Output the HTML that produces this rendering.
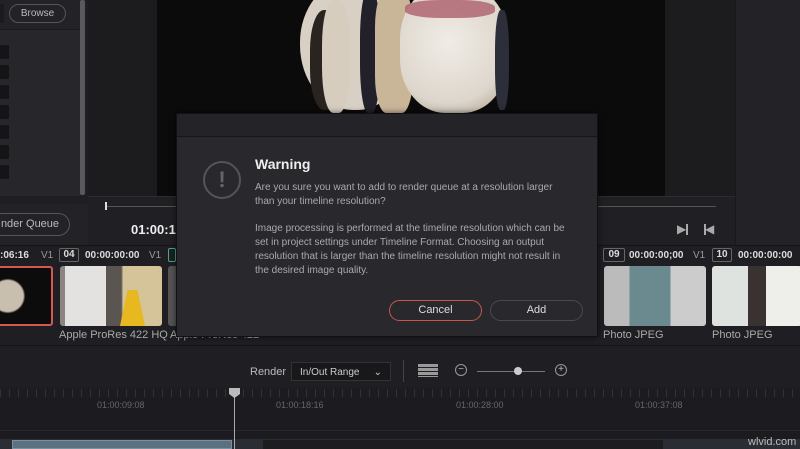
<!DOCTYPE html>
<html><head><meta charset="utf-8"><style>
*{margin:0;padding:0;box-sizing:border-box}
body{width:800px;height:449px;overflow:hidden;background:#1f1f23;font-family:"Liberation Sans",sans-serif;position:relative;color:#ccc}
.a{position:absolute}
.btn{position:absolute;border:1px solid #55555a;border-radius:12px;color:#bbb;font-size:11px;text-align:center}
.t{position:absolute;font-size:10px;white-space:nowrap}
.thumb{position:absolute;top:266px;height:60px;border-radius:3px;overflow:hidden}
</style></head><body>
<!-- left panel -->
<div class="a" style="left:0;top:0;width:80px;height:196px;background:#27272b"></div>
<div class="a" style="left:0;top:0;width:80px;height:30px;background:#232327;border-bottom:1px solid #1a1a1d"></div>
<div class="btn" style="left:9px;top:4px;width:57px;height:19px;line-height:17px;font-size:10px">Browse</div>
<div class="a" style="left:0;top:4px;width:4px;height:19px;background:#1b1b1d"></div>
<div class="a" style="left:0;top:45px;width:9px;height:136px;background:repeating-linear-gradient(#151517 0 14px,#27272b 14px 20px)"></div>
<div class="a" style="left:80px;top:0;width:5px;height:195px;background:#5a5a5e;border-radius:2px"></div>
<div class="a" style="left:0;top:204px;width:88px;height:42px;background:#232327"></div>
<div class="btn" style="left:-10px;top:213px;width:80px;height:23px;line-height:21px;font-size:11px">nder Queue</div>
<!-- viewer -->
<div class="a" style="left:88px;top:0;width:647px;height:196px;background:#1c1c1f"></div>
<div class="a" style="left:157px;top:0;width:508px;height:196px;background:#0b0b0c"></div>
<!-- ice cream -->
<div class="a" style="left:300px;top:0;width:212px;height:113px;overflow:hidden">
 <div class="a" style="left:0;top:-20px;width:105px;height:130px;border-radius:48% 40% 45% 50%;background:#d8d0c4"></div>
 <div class="a" style="left:10px;top:10px;width:35px;height:100px;border-radius:40%;background:#2a2420"></div>
 <div class="a" style="left:22px;top:0;width:28px;height:113px;border-radius:40%;background:#d6cdbf"></div>
 <div class="a" style="left:60px;top:-10px;width:20px;height:123px;border-radius:40%;background:#222028"></div>
 <div class="a" style="left:90px;top:-10px;width:22px;height:123px;background:#1e1e28;border-radius:40%"></div>
 <div class="a" style="left:75px;top:-10px;width:38px;height:123px;background:#c9b598;border-radius:30%"></div>
 <div class="a" style="left:100px;top:-15px;width:108px;height:128px;border-radius:42%;background:radial-gradient(circle at 45% 45%,#f0ece6,#ddd6cc 65%,#b7ab9a 90%)"></div>
 <div class="a" style="left:105px;top:0;width:90px;height:18px;border-radius:40%;background:#b06672;opacity:.85"></div>
 <div class="a" style="left:195px;top:10px;width:14px;height:100px;border-radius:40%;background:#2c2e3a"></div>
</div>
<!-- right panel -->
<div class="a" style="left:735px;top:0;width:65px;height:245px;background:#232327;border-left:1px solid #18181b"></div>
<!-- scrub -->
<div class="a" style="left:88px;top:196px;width:647px;height:49px;background:#202024;border-top:1px solid #2c2c30"></div>
<div class="a" style="left:106px;top:206px;width:610px;height:1px;background:#555"></div>
<div class="a" style="left:105px;top:202px;width:2px;height:8px;background:#ddd"></div>
<div class="t" style="left:131px;top:222px;font-size:13px;font-weight:bold;color:#eee">01:00:1</div>
<div class="t" style="left:677px;top:222px;font-size:12px;color:#aaa">&#9654;&#xFE0E;</div>
<div class="a" style="left:686px;top:224px;width:2px;height:11px;background:#aaa"></div>
<div class="a" style="left:704px;top:224px;width:2px;height:11px;background:#aaa"></div>
<div class="t" style="left:705px;top:222px;font-size:12px;color:#aaa">&#9664;&#xFE0E;</div>
<!-- clips strip -->
<div class="a" style="left:0;top:245px;width:800px;height:100px;background:#1f1f23;border-top:1px solid #141416"></div>
<div class="t" style="left:0;top:250px;font-size:10px;font-weight:bold;color:#ddd">:06:16</div>
<div class="t" style="left:41px;top:250px;color:#999">V1</div>
<div class="a" style="left:59px;top:248px;width:20px;height:14px;border:1px solid #666;border-radius:2px;font-size:10px;font-weight:bold;color:#ddd;text-align:center;line-height:12px">04</div>
<div class="t" style="left:85px;top:250px;font-weight:bold;color:#ddd">00:00:00:00</div>
<div class="t" style="left:149px;top:250px;color:#999">V1</div>
<div class="a" style="left:168px;top:248px;width:8px;height:14px;border:1px solid #4a8;border-radius:2px"></div>
<div class="a" style="left:603px;top:248px;width:22px;height:14px;border:1px solid #666;border-radius:2px;font-size:10px;font-weight:bold;color:#ddd;text-align:center;line-height:12px">09</div>
<div class="t" style="left:629px;top:250px;font-weight:bold;color:#ddd">00:00:00;00</div>
<div class="t" style="left:693px;top:250px;color:#999">V1</div>
<div class="a" style="left:712px;top:248px;width:20px;height:14px;border:1px solid #666;border-radius:2px;font-size:10px;font-weight:bold;color:#ddd;text-align:center;line-height:12px">10</div>
<div class="t" style="left:738px;top:250px;font-weight:bold;color:#ddd">00:00:00:00</div>
<div class="thumb" style="left:-5px;width:58px;border:2px solid #d8574c;background:radial-gradient(circle at 20% 50%,#c9bfae 0 30%,#0c0c0c 34%)"></div>
<div class="thumb" style="left:60px;width:102px;background:linear-gradient(90deg,#8a8580 0 5%,#e4e2e0 5% 45%,#5a5550 45% 60%,#d5c49a 62% 100%)"></div>
<div class="a" style="left:120px;top:290px;width:25px;height:36px;background:#e8b820;clip-path:polygon(30% 0,70% 0,100% 100%,0 100%)"></div>
<div class="thumb" style="left:168px;width:10px;background:#555"></div>
<div class="thumb" style="left:604px;width:102px;background:linear-gradient(90deg,#bbb 0 25%,#6b8a90 25% 65%,#ccc 65%)"></div>
<div class="thumb" style="left:712px;width:90px;background:linear-gradient(90deg,#dfe3e0 0 40%,#3a3230 40% 60%,#eeeeea 60%)"></div>
<div class="t" style="left:59px;top:329px;font-size:11px;color:#aaa">Apple ProRes 422 HQ</div>
<div class="t" style="left:170px;top:329px;font-size:11px;color:#aaa">Apple ProRes 422</div>
<div class="t" style="left:603px;top:329px;font-size:11px;color:#aaa">Photo JPEG</div>
<div class="t" style="left:712px;top:329px;font-size:11px;color:#aaa">Photo JPEG</div>
<!-- toolbar -->
<div class="a" style="left:0;top:345px;width:800px;height:43px;background:#1f1f23;border-top:1px solid #141416"></div>
<div class="t" style="left:250px;top:366px;font-size:11px;color:#bbb">Render</div>
<div class="a" style="left:291px;top:362px;width:100px;height:19px;background:#18181b;border:1px solid #333;font-size:10px;color:#ccc;padding:4px 8px">In/Out Range <span style="float:right">&#8964;</span></div>
<div class="a" style="left:403px;top:360px;width:1px;height:22px;background:#444"></div>
<div class="a" style="left:418px;top:364px;width:20px;height:13px;background:repeating-linear-gradient(#999 0 3px,#1f1f23 3px 4px)"></div>
<div class="a" style="left:455px;top:364px;width:12px;height:12px;border:1px solid #999;border-radius:50%;font-size:10px;line-height:9px;text-align:center;color:#bbb">−</div>
<div class="a" style="left:477px;top:371px;width:68px;height:1px;background:#777"></div>
<div class="a" style="left:514px;top:367px;width:8px;height:8px;border-radius:50%;background:#ccc"></div>
<div class="a" style="left:555px;top:364px;width:12px;height:12px;border:1px solid #999;border-radius:50%;font-size:10px;line-height:10px;text-align:center;color:#bbb">+</div>
<!-- timeline -->
<div class="a" style="left:0;top:388px;width:800px;height:61px;background:#1c1c20"></div>
<div class="a" style="left:0;top:389px;width:800px;height:8px;background:repeating-linear-gradient(90deg,#333 0 1px,transparent 1px 9px)"></div>
<div class="t" style="left:97px;top:400px;font-size:9px;color:#666">01:00:09:08</div>
<div class="t" style="left:276px;top:400px;font-size:9px;color:#666">01:00:18:16</div>
<div class="t" style="left:456px;top:400px;font-size:9px;color:#666">01:00:28:00</div>
<div class="t" style="left:635px;top:400px;font-size:9px;color:#666">01:00:37:08</div>
<div class="a" style="left:0;top:430px;width:800px;height:1px;background:#28282c"></div>
<div class="a" style="left:0;top:439px;width:800px;height:10px;background:#2a2e34"></div>
<div class="a" style="left:12px;top:440px;width:220px;height:9px;background:#5d7080;border:1px solid #7890a0"></div>
<div class="a" style="left:263px;top:440px;width:400px;height:9px;background:#1d1d20"></div>
<div class="a" style="left:234px;top:390px;width:1px;height:59px;background:#aaa"></div>
<div class="a" style="left:229px;top:388px;width:11px;height:10px;background:#bbb;clip-path:polygon(0 0,100% 0,100% 60%,50% 100%,0 60%)"></div>
<div class="t" style="left:748px;top:436px;font-size:11px;color:#bbb">wlvid.com</div>
<!-- dialog -->
<div class="a" style="left:176px;top:113px;width:422px;height:224px;background:#29292d;border:1px solid #111;box-shadow:0 0 6px rgba(0,0,0,.6)">
 <div class="a" style="left:0;top:0;width:420px;height:23px;background:#242428;border-bottom:1px solid #161618"></div>
 <div class="a" style="left:26px;top:47px;width:38px;height:38px;border:2px solid #555;border-radius:50%;color:#666;font-size:22px;font-weight:bold;text-align:center;line-height:34px">!</div>
 <div class="t" style="left:78px;top:42px;font-size:14px;font-weight:bold;color:#eee">Warning</div>
 <div class="t" style="left:78px;top:67px;font-size:10px;line-height:14px;color:#aaa">Are you sure you want to add to render queue at a resolution larger<br>than your timeline resolution?</div>
 <div class="t" style="left:78px;top:108px;font-size:10px;line-height:14px;color:#aaa">Image processing is performed at the timeline resolution which can be<br>set in project settings under Timeline Format. Choosing an output<br>resolution that is larger than the timeline resolution might not result in<br>the desired image quality.</div>
 <div class="btn" style="left:212px;top:186px;width:93px;height:21px;line-height:19px;border-color:#c9554c;color:#ddd">Cancel</div>
 <div class="btn" style="left:313px;top:186px;width:93px;height:21px;line-height:19px;border-color:#4a4a4e;color:#ddd">Add</div>
</div>
</body></html>
